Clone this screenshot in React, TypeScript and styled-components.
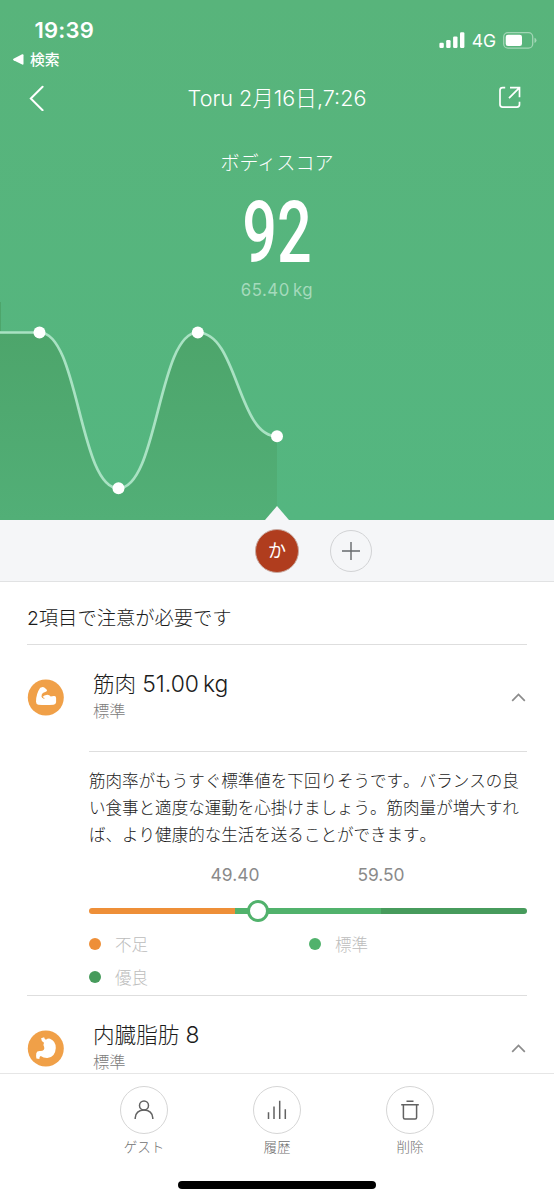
import React from 'react';
import styled, { createGlobalStyle } from 'styled-components';

const GlobalStyle = createGlobalStyle`
  *, *::before, *::after { box-sizing: border-box; }
  body {
    margin: 0;
    background: #fff;
    font-family: Inter, 'Noto Sans CJK JP', sans-serif;
    color: #333;
  }
  svg { display: block; }
`;

const Screen = styled.div`
  width: 554px;
  height: 1200px;
  overflow: hidden;
  display: flex;
  flex-direction: column;
  background: #fff;
`;

const Hero = styled.header`
  height: 520px;
  flex: none;
  display: flex;
  flex-direction: column;
  color: #fff;
  background: linear-gradient(#58b47b, #54b680);
`;

const StatusBar = styled.div`
  height: 72px;
  display: flex;
  justify-content: space-between;
  padding: 17px 17px 0 13px;
`;

const Clock = styled.div`
  padding-left: 21.5px;
  font-size: 22px;
  font-weight: 600;
  line-height: 27px;
  letter-spacing: 0.2px;
`;

const BackToApp = styled.div`
  display: flex;
  align-items: center;
  gap: 6px;
  margin-top: 5.5px;
  font-size: 14.8px;
  font-weight: 500;
  line-height: 20px;
`;

const Signals = styled.div`
  height: 23px;
  margin-top: 12px;
  display: flex;
  align-items: center;
  font-size: 17.5px;
  line-height: 23px;
`;

const Network = styled.span`
  margin: 0 7px 0 7px;
`;

const NavBar = styled.nav`
  height: 52px;
  display: flex;
  align-items: center;
  justify-content: space-between;
  padding: 0 33px 1px 28px;
`;

const NavTitle = styled.h1`
  margin: 0 0 0 11px;
  font-size: 21.6px;
  font-weight: 300;
  line-height: 30px;
  white-space: nowrap;
`;

const ScoreBlock = styled.section`
  height: 176px;
  display: flex;
  flex-direction: column;
  align-items: center;
  padding-top: 25px;
`;

const ScoreLabel = styled.div`
  font-size: 19.1px;
  font-weight: 300;
  line-height: 28px;
`;

const ScoreValue = styled.div`
  height: 88px;
  margin-top: 12px;
  font-family: Roboto, sans-serif;
  font-size: 86px;
  font-weight: 500;
  line-height: 88px;
  transform: scaleX(0.71);
`;

const ScoreWeight = styled.div`
  margin-top: 2px;
  font-size: 16.8px;
  line-height: 22px;
  letter-spacing: 0.5px;
  word-spacing: -2px;
  color: #a5dabc;
`;

const Members = styled.div`
  height: 62px;
  flex: none;
  display: flex;
  align-items: center;
  gap: 31px;
  padding-left: 255px;
  background: #f5f6f8;
  border-bottom: 1px solid #e1e2e3;
`;

const Avatar = styled.div`
  width: 44px;
  height: 44px;
  display: grid;
  place-items: center;
  border: 1px solid #c9a9a0;
  border-radius: 50%;
  background: #b03d1e;
  color: #fff;
  font-size: 18px;
  line-height: 24px;
`;

const AddMember = styled.button`
  width: 42px;
  height: 42px;
  display: grid;
  place-items: center;
  padding: 0;
  border: 1px solid #d2d3d5;
  border-radius: 50%;
  background: transparent;
`;

const Report = styled.main`
  height: 491px;
  flex: none;
  overflow: hidden;
  padding: 0 27px;
`;

const Notice = styled.h2`
  height: 63px;
  margin: 0;
  padding-top: 20px;
  border-bottom: 1px solid #dedede;
  font-size: 19.3px;
  font-weight: 300;
  line-height: 32px;
  color: #1c1c1c;
`;

const ItemHeader = styled.div`
  height: 106px;
  display: grid;
  grid-template-columns: 37px 1fr 16px;
  column-gap: 29px;
  align-items: center;
  padding-bottom: 2px;
`;

const ItemText = styled.div`
  padding-bottom: 4px;
`;

const ItemTitle = styled.div`
  display: flex;
  align-items: center;
  gap: 6px;
  font-size: 21.6px;
  font-weight: 300;
  line-height: 32px;
  color: #1c1c1c;
`;

const ItemValue = styled.span`
  font-size: 22.9px;
  font-weight: 350;
  word-spacing: -2.5px;
`;

const ItemStatus = styled.div`
  font-size: 16.3px;
  font-weight: 300;
  line-height: 23px;
  color: #7c7c7c;
`;

const Detail = styled.div`
  height: 244px;
  margin-left: 62px;
  border-top: 1px solid #dedede;
`;

const Advice = styled.p`
  margin: 0;
  padding-top: 16px;
  font-size: 16.55px;
  font-weight: 300;
  font-kerning: none;
  line-height: 26.8px;
  white-space: nowrap;
  color: #1c1c1c;
`;

const Bounds = styled.div`
  display: flex;
  justify-content: center;
  margin-top: 15px;
  font-size: 17.4px;
  line-height: 24px;
  color: #8a8a8a;
`;

const Bound = styled.span`
  width: 146px;
  text-align: center;
`;

const Scale = styled.div`
  position: relative;
  height: 6px;
  display: flex;
  margin-top: 21px;
`;

const Segment = styled.div<{ $color: string }>`
  flex: 1;
  background: ${({ $color }) => $color};
  &:first-of-type { border-radius: 3px 0 0 3px; }
  &:nth-of-type(3) { border-radius: 0 3px 3px 0; }
`;

const Knob = styled.div`
  position: absolute;
  top: -8px;
  left: 158px;
  width: 22px;
  height: 22px;
  border: 3px solid #51b26c;
  border-radius: 50%;
  background: #fff;
`;

const Legend = styled.div`
  display: grid;
  grid-template-columns: 220px 1fr;
  grid-auto-rows: 33px;
  margin-top: 13px;
`;

const LegendItem = styled.div<{ $color: string }>`
  display: flex;
  align-items: center;
  gap: 14px;
  font-size: 16.5px;
  font-weight: 300;
  color: #bcbcbc;
  &::before {
    content: '';
    width: 12px;
    height: 12px;
    border-radius: 50%;
    background: ${({ $color }) => $color};
  }
`;

const Rule = styled.div`
  height: 1px;
  background: #dedede;
`;

const Toolbar = styled.footer`
  height: 127px;
  flex: none;
  display: flex;
  flex-direction: column;
  align-items: center;
  border-top: 1px solid #e6e6e6;
`;

const Actions = styled.div`
  height: 107px;
  display: flex;
  gap: 85px;
  padding-top: 12px;
`;

const Action = styled.div`
  width: 48px;
  display: flex;
  flex-direction: column;
  align-items: center;
  font-size: 13.5px;
  font-weight: 300;
  line-height: 20px;
  white-space: nowrap;
  color: #707070;
`;

const ActionCircle = styled.div`
  width: 48px;
  height: 48px;
  flex: none;
  display: grid;
  place-items: center;
  margin-bottom: 3px;
  border: 1px solid #d6d6d6;
  border-radius: 50%;
`;

const HomeIndicator = styled.div`
  width: 198px;
  height: 7.5px;
  border-radius: 4px;
  background: #000;
`;

const ORANGE = '#ee8f38';
const GREEN = '#51b26c';
const DARK_GREEN = '#479b5c';

const curve =
  'M0 32.5H39.5C79 32.5 79 188.3 118.5 188.3S158 32.5 197.8 32.5S237.5 136.3 277 136.3';
const points = [[39.5, 32.5], [118.5, 188.3], [197.8, 32.5], [277, 136.3]];

const TrendChart = () => (
  <svg width="554" height="220" viewBox="0 0 554 220">
    <defs>
      <linearGradient id="area" x1="0" y1="0" x2="0" y2="1">
        <stop offset="0" stopColor="#4da56b" />
        <stop offset="1" stopColor="#52af77" />
      </linearGradient>
    </defs>
    <path d={`${curve}V220H0Z`} fill="url(#area)" />
    <path d="M0.5 2V31" stroke="#4da56b" />
    <path d={curve} fill="none" stroke="#a9e2c3" strokeWidth="2.7" />
    {points.map(([x, y]) => (
      <circle key={x} cx={x} cy={y} r="6" fill="#fff" />
    ))}
    <path d="M265 220L277 206L289 220Z" fill="#f5f6f8" />
  </svg>
);

const SignalIcon = () => (
  <svg width="26" height="17" viewBox="0 0 26 17" fill="#fff">
    <rect x="0.4" y="10.8" width="4.4" height="5.2" rx="1.2" />
    <rect x="7.2" y="8" width="4.4" height="8" rx="1.2" />
    <rect x="14.1" y="4.4" width="4.4" height="11.6" rx="1.2" />
    <rect x="21" y="0.3" width="4.4" height="15.7" rx="1.2" />
  </svg>
);

const BatteryIcon = () => (
  <svg width="34" height="17" viewBox="0 0 34 17">
    <rect x="0.7" y="0.7" width="29" height="15.4" rx="4.2" fill="none" stroke="#a1d6b5" strokeWidth="1.3" />
    <rect x="2.7" y="2.7" width="16.3" height="11.4" rx="2.3" fill="#fff" />
    <path d="M31.5 5.7Q33.5 6.5 33.5 8.4T31.5 11.1Z" fill="#a1d6b5" />
  </svg>
);

const BackIcon = () => (
  <svg width="17" height="26" viewBox="0 0 17 26" fill="none" stroke="#fff" strokeWidth="2" strokeLinecap="round">
    <path d="M14.6 1.8L2.8 13.5L14.6 25.2" />
  </svg>
);

const ShareIcon = () => (
  <svg width="23" height="23" viewBox="0 0 23 23" fill="none" stroke="#fff" strokeWidth="1.7">
    <path d="M7.2 1.6H4.6Q2 1.6 2 4.2V18.6Q2 21.2 4.6 21.2H18.9Q21.5 21.2 21.5 18.6V15.8" />
    <path d="M12 1.6H21.5V11.2M21 2.1L11 12.2" />
  </svg>
);

const PlusIcon = () => (
  <svg width="20" height="20" viewBox="0 0 20 20" stroke="#66696c" strokeWidth="1.4">
    <path d="M1 10H19M10 1V19" />
  </svg>
);

const ChevronIcon = () => (
  <svg width="15" height="9" viewBox="0 0 15 9" fill="none" stroke="#8b8b8b" strokeWidth="1.7">
    <path d="M1.2 7.8L7.5 1.5L13.8 7.8" />
  </svg>
);

const MuscleIcon = () => (
  <svg width="37" height="37" viewBox="0 0 37 37">
    <circle cx="18.8" cy="18.5" r="18" fill="#f0a048" />
    <path
      d="M13.2 8.7L15.7 7.9Q16.6 7.8 17.3 8.6L19.6 10.4Q20.6 11.7 19.3 12.6L15.9 14Q14.3 15.2 14.6 17.6L15.2 18.2Q17.2 15.9 20.2 15.7Q22.5 15.8 23.7 17.4Q25.5 17 27.4 17.1Q29.1 17.3 29.1 19V23.3Q28.8 25.4 26.5 25.7Q18.5 26.5 11.3 25.7Q9.1 25.4 9 22.8Q8.9 15 13.2 8.7Z"
      fill="#fff"
    />
    <path d="M15 18.2Q15.9 19.2 17 19.3" fill="none" stroke="#f0a048" strokeWidth="1" strokeLinecap="round" />
  </svg>
);

const StomachIcon = () => (
  <svg width="37" height="37" viewBox="0 0 37 37">
    <circle cx="18.8" cy="18.5" r="18" fill="#f0a048" />
    <path
      d="M14.1 8.2L17.1 7.2Q17.4 9 18.9 9.8Q20.8 8.2 23 8.7Q28.8 11 28.8 17.9Q28.3 27 20.3 28.1Q16.4 28.2 13.7 26Q12.2 26.6 12.4 29L9.4 28.4Q8.9 25.5 9.3 23.2Q9.8 20.9 12.8 21Q15.5 21.3 16.8 19.8Q17.8 18.3 17 16.6Q15.9 15 17 12.8Q14.2 11.5 14.1 8.2Z"
      fill="#fff"
    />
  </svg>
);

const GuestIcon = () => (
  <svg width="20" height="20" viewBox="0 0 20 20" fill="none" stroke="#626262" strokeWidth="1.5">
    <circle cx="10" cy="5.4" r="4.5" />
    <path d="M1.2 19V18C1.2 13 5 9.9 10 9.9S18.8 13 18.8 18V19" />
  </svg>
);

const HistoryIcon = () => (
  <svg width="20" height="20" viewBox="0 0 20 20" stroke="#626262" strokeWidth="1.5">
    <path d="M1.5 12.2V19M7 6.6V19M12.7 0.8V19M18.3 9.2V19" />
  </svg>
);

const DeleteIcon = () => (
  <svg width="20" height="20" viewBox="0 0 20 20" fill="none" stroke="#626262" strokeWidth="1.5">
    <path d="M6.5 1.2H13.5M1.2 4.7H18.8M3.4 4.7V17.5Q3.4 19 4.9 19H15.1Q16.6 19 16.6 17.5V4.7" />
  </svg>
);

const actions = [
  { label: 'ゲスト', icon: <GuestIcon /> },
  { label: '履歴', icon: <HistoryIcon /> },
  { label: '削除', icon: <DeleteIcon /> },
];

type ItemProps = { icon: React.ReactNode; name: string; value: string };

const Item = ({ icon, name, value }: ItemProps) => (
  <ItemHeader>
    {icon}
    <ItemText>
      <ItemTitle>
        {name}
        <ItemValue>{value}</ItemValue>
      </ItemTitle>
      <ItemStatus>標準</ItemStatus>
    </ItemText>
    <ChevronIcon />
  </ItemHeader>
);

export default function App() {
  return (
    <Screen lang="ja">
      <GlobalStyle />
      <Hero>
        <StatusBar>
          <div>
            <Clock>19:39</Clock>
            <BackToApp>
              <svg width="11" height="11" viewBox="0 0 11 11" fill="#fff">
                <path d="M0.5 4.7L9.2 0.3Q10.5 0 10.5 1.3V9.7Q10.5 11 9.2 10.6L0.5 6.3Q-0.4 5.5 0.5 4.7Z" />
              </svg>
              検索
            </BackToApp>
          </div>
          <Signals>
            <SignalIcon />
            <Network>4G</Network>
            <BatteryIcon />
          </Signals>
        </StatusBar>
        <NavBar>
          <BackIcon />
          <NavTitle>Toru 2月16日,7:26</NavTitle>
          <ShareIcon />
        </NavBar>
        <ScoreBlock>
          <ScoreLabel>ボディスコア</ScoreLabel>
          <ScoreValue>92</ScoreValue>
          <ScoreWeight>65.40 kg</ScoreWeight>
        </ScoreBlock>
        <TrendChart />
      </Hero>

      <Members>
        <Avatar>か</Avatar>
        <AddMember aria-label="追加">
          <PlusIcon />
        </AddMember>
      </Members>

      <Report>
        <Notice>2項目で注意が必要です</Notice>
        <Item icon={<MuscleIcon />} name="筋肉" value="51.00 kg" />
        <Detail>
          <Advice>
            筋肉率がもうすぐ標準値を下回りそうです。バランスの良
            <br />
            い食事と適度な運動を心掛けましょう。筋肉量が増大すれ
            <br />
            ば、より健康的な生活を送ることができます。
          </Advice>
          <Bounds>
            <Bound>49.40</Bound>
            <Bound>59.50</Bound>
          </Bounds>
          <Scale>
            <Segment $color={ORANGE} />
            <Segment $color={GREEN} />
            <Segment $color={DARK_GREEN} />
            <Knob />
          </Scale>
          <Legend>
            <LegendItem $color={ORANGE}>不足</LegendItem>
            <LegendItem $color={GREEN}>標準</LegendItem>
            <LegendItem $color={DARK_GREEN}>優良</LegendItem>
          </Legend>
        </Detail>
        <Rule />
        <Item icon={<StomachIcon />} name="内臓脂肪" value="8" />
      </Report>

      <Toolbar>
        <Actions>
          {actions.map(({ label, icon }) => (
            <Action key={label}>
              <ActionCircle>{icon}</ActionCircle>
              {label}
            </Action>
          ))}
        </Actions>
        <HomeIndicator />
      </Toolbar>
    </Screen>
  );
}
